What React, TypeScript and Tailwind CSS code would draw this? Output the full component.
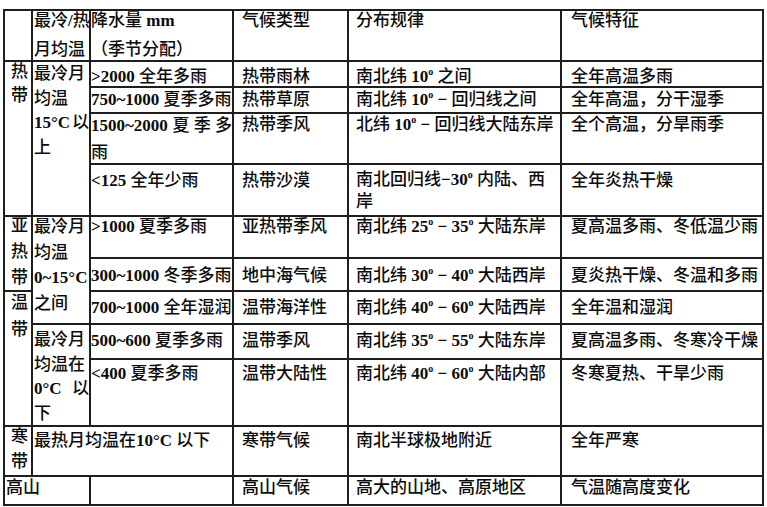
import React from 'react';

type Line = string | string[];

const LATIN = /^[\x20-\x7e°−]+$/;

// Latin runs (numbers, mm, °C) are bold Times-like, CJK stays a touch heavier than regular
const Txt: React.FC<{ s: string }> = ({ s }) => (
  <>
    {s
      .split(/([\x20-\x7e°−]+|º)/)
      .filter(Boolean)
      .map((p, i) =>
        p === 'º' ? (
          <span key={i} className="align-super text-[10px] font-bold leading-none">o</span>
        ) : LATIN.test(p) ? (
          <b key={i} className="font-bold whitespace-pre">{p}</b>
        ) : (
          <span key={i} className="font-medium">{p}</span>
        )
      )}
  </>
);

interface CellProps {
  at: string;
  pad?: string;
  inner?: string;
  lines?: Line[];
}

const Cell: React.FC<CellProps> = ({ at, pad = '', inner = '', lines = [] }) => (
  <div className={`bg-white overflow-hidden whitespace-nowrap ${at} ${pad}`}>
    <div className={inner}>
      {lines.map((ln, i) =>
        Array.isArray(ln) ? (
          <div key={i} className="flex justify-between">
            {ln.map((t, j) => (
              <span key={j}>
                <Txt s={t} />
              </span>
            ))}
          </div>
        ) : (
          <div key={i}>
            <Txt s={ln} />
          </div>
        )
      )}
    </div>
  </div>
);

const P0 = 'pl-[6px]';
const P1 = 'pl-[1px]';
const P3 = 'pl-[8px]';
const P4 = 'pl-[7px]';
const P5 = 'pl-[9px]';

export default function App() {
  return (
    <div className="w-[767px] h-[507px] overflow-hidden bg-white pl-[3px] pt-[9px] text-[17px] text-[#0c0c0c] font-['Liberation_Serif','Noto_Sans_CJK_SC',serif]">
      <div className="grid w-fit grid-cols-[26px_56px_141px_113px_211px_200px] grid-rows-[49px_24px_24px_49px_50px_40px_31px_31px_33px_65px_48px_27px] gap-[2px] p-[2px] bg-[#1e1e1e]">
        {/* header */}
        <Cell at="col-start-1 row-start-1" />
        <Cell at="col-start-2 row-start-1" pad={P1} inner="-mt-[5px] leading-[29px]" lines={['最冷/热', '月均温']} />
        <Cell at="col-start-3 row-start-1" inner="-mt-[5px] leading-[29px]" lines={['降水量 mm', '（季节分配）']} />
        <Cell at="col-start-4 row-start-1" pad={P3} inner="-mt-[5px] leading-[29px]" lines={['气候类型']} />
        <Cell at="col-start-5 row-start-1" pad={P4} inner="-mt-[5px] leading-[29px]" lines={['分布规律']} />
        <Cell at="col-start-6 row-start-1" pad={P5} inner="-mt-[5px] leading-[29px]" lines={['气候特征']} />

        {/* 热带 */}
        <Cell at="col-start-1 row-start-2 row-span-4" pad={P0} inner="-mt-[2px] leading-[24px]" lines={['热', '带']} />
        <Cell
          at="col-start-2 row-start-2 row-span-4"
          pad={P1}
          inner="leading-[24.5px]"
          lines={['最冷月', '均温', ['15°C', '以'], '上']}
        />

        <Cell at="col-start-3 row-start-2" inner="pt-[2px] leading-[25px]" lines={['>2000 全年多雨']} />
        <Cell at="col-start-4 row-start-2" pad={P3} inner="pt-[2px] leading-[25px]" lines={['热带雨林']} />
        <Cell at="col-start-5 row-start-2" pad={P4} inner="pt-[2px] leading-[25px]" lines={['南北纬 10º 之间']} />
        <Cell at="col-start-6 row-start-2" pad={P5} inner="pt-[2px] leading-[25px]" lines={['全年高温多雨']} />

        <Cell at="col-start-3 row-start-3" inner="leading-[23px]" lines={['750~1000 夏季多雨']} />
        <Cell at="col-start-4 row-start-3" pad={P3} inner="leading-[23px]" lines={['热带草原']} />
        <Cell at="col-start-5 row-start-3" pad={P4} inner="leading-[23px]" lines={['南北纬 10º − 回归线之间']} />
        <Cell at="col-start-6 row-start-3" pad={P5} inner="leading-[23px]" lines={['全年高温，分干湿季']} />

        <Cell at="col-start-3 row-start-4" inner="-mt-[2px] leading-[27px]" lines={[['1500~2000', '夏 季 多'], '雨']} />
        <Cell at="col-start-4 row-start-4" pad={P3} inner="leading-[22px]" lines={['热带季风']} />
        <Cell at="col-start-5 row-start-4" pad={P4} inner="leading-[22px]" lines={['北纬 10º − 回归线大陆东岸']} />
        <Cell at="col-start-6 row-start-4" pad={P5} inner="leading-[22px]" lines={['全个高温，分旱雨季']} />

        <Cell at="col-start-3 row-start-5" inner="pt-[3px] leading-[25px]" lines={['<125 全年少雨']} />
        <Cell at="col-start-4 row-start-5" pad={P3} inner="pt-[3px] leading-[25px]" lines={['热带沙漠']} />
        <Cell at="col-start-5 row-start-5" pad={P4} inner="pt-[4px] leading-[22px]" lines={['南北回归线−30º 内陆、西', '岸']} />
        <Cell at="col-start-6 row-start-5" pad={P5} inner="pt-[3px] leading-[25px]" lines={['全年炎热干燥']} />

        {/* 亚热带 */}
        <Cell at="col-start-1 row-start-6 row-span-2" pad={P0} inner="-mt-[4px] leading-[26px]" lines={['亚', '热', '带']} />
        <Cell
          at="col-start-2 row-start-6 row-span-3"
          pad={P1}
          inner="-mt-[3px] leading-[25.5px]"
          lines={['最冷月', '均温', '0~15°C', '之间']}
        />

        <Cell at="col-start-3 row-start-6" inner="leading-[20px]" lines={['>1000 夏季多雨']} />
        <Cell at="col-start-4 row-start-6" pad={P3} inner="leading-[20px]" lines={['亚热带季风']} />
        <Cell at="col-start-5 row-start-6" pad={P4} inner="leading-[20px]" lines={['南北纬 25º − 35º 大陆东岸']} />
        <Cell at="col-start-6 row-start-6" pad={P5} inner="leading-[20px]" lines={['夏高温多雨、冬低温少雨']} />

        <Cell at="col-start-3 row-start-7" inner="pt-[4px] leading-[25px]" lines={['300~1000 冬季多雨']} />
        <Cell at="col-start-4 row-start-7" pad={P3} inner="pt-[4px] leading-[25px]" lines={['地中海气候']} />
        <Cell at="col-start-5 row-start-7" pad={P4} inner="pt-[4px] leading-[25px]" lines={['南北纬 30º − 40º 大陆西岸']} />
        <Cell at="col-start-6 row-start-7" pad={P5} inner="pt-[4px] leading-[25px]" lines={['夏炎热干燥、冬温和多雨']} />

        {/* 温带 */}
        <Cell at="col-start-1 row-start-8 row-span-3" pad={P0} inner="-mt-[3px] leading-[27px]" lines={['温', '带']} />

        <Cell at="col-start-3 row-start-8" inner="pt-[3px] leading-[25px]" lines={['700~1000 全年湿润']} />
        <Cell at="col-start-4 row-start-8" pad={P3} inner="pt-[3px] leading-[25px]" lines={['温带海洋性']} />
        <Cell at="col-start-5 row-start-8" pad={P4} inner="pt-[3px] leading-[25px]" lines={['南北纬 40º − 60º 大陆西岸']} />
        <Cell at="col-start-6 row-start-8" pad={P5} inner="pt-[3px] leading-[25px]" lines={['全年温和湿润']} />

        <Cell
          at="col-start-2 row-start-9 row-span-2"
          pad={P1}
          inner="pt-[3px] leading-[24.5px]"
          lines={['最冷月', '均温在', ['0°C', '以'], '下']}
        />

        <Cell at="col-start-3 row-start-9" inner="pt-[3px] leading-[25px]" lines={['500~600 夏季多雨']} />
        <Cell at="col-start-4 row-start-9" pad={P3} inner="pt-[3px] leading-[25px]" lines={['温带季风']} />
        <Cell at="col-start-5 row-start-9" pad={P4} inner="pt-[3px] leading-[25px]" lines={['南北纬 35º − 55º 大陆东岸']} />
        <Cell at="col-start-6 row-start-9" pad={P5} inner="pt-[3px] leading-[25px]" lines={['夏高温多雨、冬寒冷干燥']} />

        <Cell at="col-start-3 row-start-10" inner="pt-[1px] leading-[25px]" lines={['<400 夏季多雨']} />
        <Cell at="col-start-4 row-start-10" pad={P3} inner="pt-[1px] leading-[25px]" lines={['温带大陆性']} />
        <Cell at="col-start-5 row-start-10" pad={P4} inner="pt-[1px] leading-[25px]" lines={['南北纬 40º − 60º 大陆内部']} />
        <Cell at="col-start-6 row-start-10" pad={P5} inner="pt-[1px] leading-[25px]" lines={['冬寒夏热、干旱少雨']} />

        {/* 寒带 */}
        <Cell at="col-start-1 row-start-11" pad={P0} inner="-mt-[3px] leading-[25px]" lines={['寒', '带']} />
        <Cell at="col-start-2 col-span-2 row-start-11" pad={P1} inner="pt-[1px] leading-[25px]" lines={['最热月均温在10°C 以下']} />
        <Cell at="col-start-4 row-start-11" pad={P3} inner="pt-[1px] leading-[25px]" lines={['寒带气候']} />
        <Cell at="col-start-5 row-start-11" pad={P4} inner="pt-[1px] leading-[25px]" lines={['南北半球极地附近']} />
        <Cell at="col-start-6 row-start-11" pad={P5} inner="pt-[1px] leading-[25px]" lines={['全年严寒']} />

        {/* 高山 */}
        <Cell at="col-start-1 col-span-2 row-start-12" pad="pl-[1px]" inner="leading-[21px]" lines={['高山']} />
        <Cell at="col-start-3 row-start-12" />
        <Cell at="col-start-4 row-start-12" pad={P3} inner="leading-[21px]" lines={['高山气候']} />
        <Cell at="col-start-5 row-start-12" pad={P4} inner="leading-[21px]" lines={['高大的山地、高原地区']} />
        <Cell at="col-start-6 row-start-12" pad={P5} inner="leading-[21px]" lines={['气温随高度变化']} />
      </div>
    </div>
  );
}
